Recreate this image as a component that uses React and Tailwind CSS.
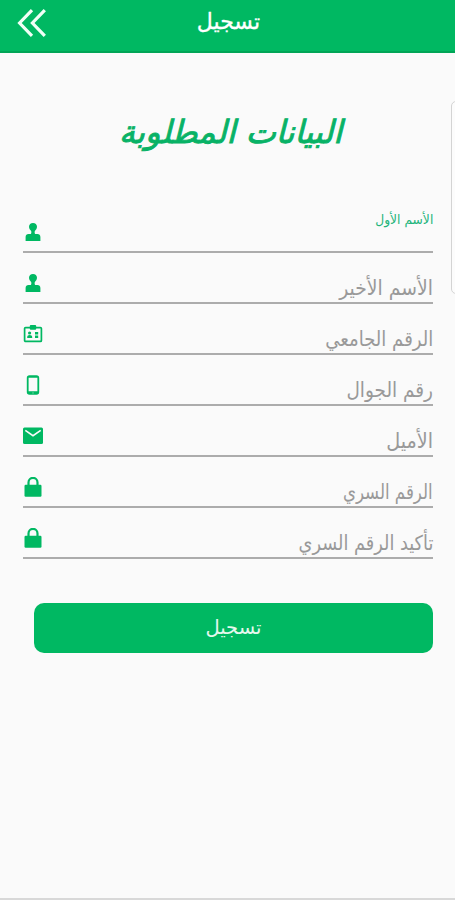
const fields = [
  { label: 'الأسم الأول', icon: 'person', style: 'mt-[6px] text-[13px] scale-x-[1.05] text-[#22b47a]' },
  { label: 'الأسم الأخير', icon: 'person', style: 'mt-[23px] text-[20.5px] scale-x-[1.02] text-[#999]' },
  { label: 'الرقم الجامعي', icon: 'card', style: 'mt-[23px] text-[20.5px] scale-x-[0.98] text-[#999]' },
  { label: 'رقم الجوال', icon: 'phone', style: 'mt-[23px] text-[20.5px] text-[#999]' },
  { label: 'الأميل', icon: 'mail', style: 'mt-[23px] text-[20.5px] scale-x-[1.04] text-[#999]' },
  { label: 'الرقم السري', icon: 'lock', style: 'mt-[23px] text-[20.5px] scale-x-[0.9] text-[#999]' },
  { label: 'تأكيد الرقم السري', icon: 'lock', style: 'mt-[23px] text-[20.5px] scale-x-[0.96] text-[#999]' },
];

function FieldIcon({ name }) {
  return (
    <svg className="mt-5 shrink-0" width="20" height="20" viewBox="0 0 20 20" fill="#00b862">
      {name === 'person' && (
        <path d="M10 1c2.400 0 4 1.600 4 3.800 0 2-1.200 3-2.100 4.200-.5.700-.3 2.500.3 3h2.300c1.700 0 2.900 1.300 2.900 3V19H2.600V15c0-1.700 1.200-3 2.900-3h2.300c.6-.5.8-2.300.3-3C7.200 7.800 6 6.800 6 4.800 6 2.600 7.600 1 10 1z" />
      )}
      {name === 'card' && (
        <>
          <rect x="1.600" y="3.600" width="16.800" height="13.800" rx="1" fill="none" stroke="#00b862" strokeWidth="1.700" />
          <rect x="6.800" y="1" width="6.400" height="4.800" rx="1" />
          <circle cx="6.600" cy="9" r="1.600" />
          <path d="M4.200 14v-1c0-1.200 1-2 2.500-2s2.500.8 2.500 2v1zM12 8h3.200v2.400H12zM12 11.600h3.200V14H12z" />
        </>
      )}
      {name === 'phone' && (
        <>
          <path fillRule="evenodd" d="M6.500.300h7A2.700 2.700 0 0 1 16.200 3v14a2.700 2.700 0 0 1-2.700 2.700h-7A2.700 2.700 0 0 1 3.800 17V3A2.700 2.700 0 0 1 6.500.300zM5.600 2.700v13.500h8.800V2.700z" />
          <circle cx="10" cy="17.900" r=".7" fill="#8fdcb8" />
        </>
      )}
      {name === 'mail' && (
        <>
          <rect y="1.500" width="20" height="16.500" rx="1.500" />
          <path d="M2.300 4.300L10 9.700l7.700-5.400" fill="none" stroke="#fafafa" strokeWidth="1.600" />
        </>
      )}
      {name === 'lock' && (
        <>
          <rect x="1.500" y="7.800" width="17" height="12" rx="1.200" />
          <path d="M5.500 9V5.400a4.500 4.500 0 0 1 9 0V9" fill="none" stroke="#00b862" strokeWidth="2.200" />
        </>
      )}
    </svg>
  );
}

export default function App() {
  return (
    <div className="relative flex h-[900px] w-[455px] flex-col overflow-hidden border-b-2 border-[#d8d8d8] bg-[#fafafa] font-['DejaVu_Sans_Condensed','DejaVu_Sans',sans-serif]">
      <header className="grid h-[53px] shrink-0 grid-cols-3 border-b-2 border-[#00a556] bg-[#00b862] text-white">
        <button type="button" className="flex items-start pt-[9px] pl-[17px]">
          <svg width="30" height="28" viewBox="0 0 30 28" fill="none" stroke="#f0fff6" strokeWidth="3.200">
            <path d="M15 1.200L2.600 14 15 26.800M27.800 1.200L15.400 14l12.400 12.800" />
          </svg>
        </button>
        <h1 dir="rtl" className="pt-[5px] pl-[2px] text-center font-['DejaVu_Sans'] text-[22px] leading-[33px] [-webkit-text-stroke:0.3px_white]">تسجيل</h1>
      </header>

      <h2 dir="rtl" className="mt-[55px] h-[48px] pl-[6px] text-center font-['DejaVu_Sans'] text-[32px] leading-[48px] italic text-[#08b266] [-webkit-text-stroke:0.9px_#08b266]">
        البيانات المطلوبة
      </h2>

      <form className="mt-[46px] flex flex-col pr-[22px] pl-[23px]">
        {fields.map((f, i) => (
          <div key={i} className="flex h-[51px] items-start justify-between border-b-2 border-[#acacac]">
            <FieldIcon name={f.icon} />
            <label dir="rtl" className={`origin-right leading-[24px] ${f.style}`}>{f.label}</label>
          </div>
        ))}
        <button type="button" dir="rtl" className="mt-[44px] ml-[11px] h-[50px] rounded-[10px] bg-[#00b862] font-['DejaVu_Sans'] text-[19.5px] text-[#e6f8ee]">
          تسجيل
        </button>
      </form>

      <div className="absolute top-[101px] left-[451px] h-[193px] w-10 rounded-[5px] border border-[#d4d4d4] bg-[#fcfcfc]" />
    </div>
  );
}
